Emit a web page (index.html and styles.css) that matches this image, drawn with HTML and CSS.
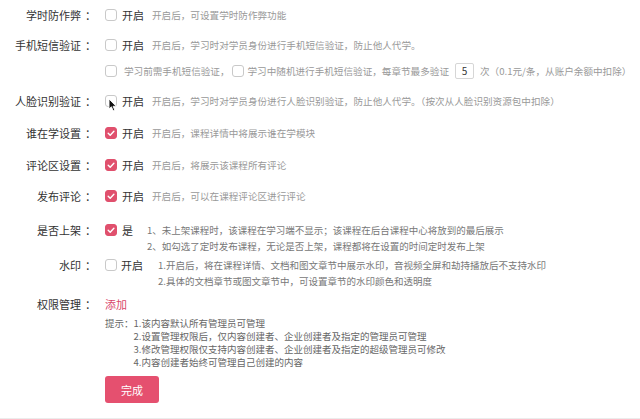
FILE: index.html
```html
<!DOCTYPE html>
<html lang="zh-CN">
<head>
<meta charset="utf-8">
<title>课程设置</title>
<link rel="stylesheet" href="styles.css">
</head>
<body>
<div class="page">
  <div class="form">
    <div class="row r1">
      <div class="label">学时防作弊<span class="colon">：</span></div>
      <div class="content">
        <span class="cb"></span><span class="opt">开启</span><span class="desc">开启后，可设置学时防作弊功能</span>
      </div>
    </div>
    <div class="row r2">
      <div class="label">手机短信验证<span class="colon">：</span></div>
      <div class="content">
        <span class="cb"></span><span class="opt">开启</span><span class="desc">开启后，学习时对学员身份进行手机短信验证，防止他人代学。</span>
      </div>
    </div>
    <div class="row r2b">
      <div class="label"></div>
      <div class="content">
        <span class="cb"></span><span class="desc sub1">学习前需手机短信验证，</span><span class="cb"></span><span class="desc sub2">学习中随机进行手机短信验证，每章节最多验证</span><span class="num">5</span><span class="desc sub3">次（0.1元/条，从账户余额中扣除）</span>
      </div>
    </div>
    <div class="row r3">
      <div class="label">人脸识别验证<span class="colon">：</span></div>
      <div class="content">
        <span class="cb cursor-host"><svg class="cursor" width="9" height="14" viewBox="0 0 9 14"><path d="M1 1 L1 11 L3.4 8.8 L5.2 12.8 L6.8 12.1 L5.1 8.3 L8.2 8.3 Z" fill="#111" stroke="#fff" stroke-width="0.9" stroke-linejoin="round"/></svg></span><span class="opt">开启</span><span class="desc">开启后，学习时对学员身份进行人脸识别验证，防止他人代学。（按次从人脸识别资源包中扣除）</span>
      </div>
    </div>
    <div class="row r4">
      <div class="label">谁在学设置<span class="colon">：</span></div>
      <div class="content">
        <span class="cb on"><svg viewBox="0 0 12 12" width="12" height="12"><path d="M3.2 6.2 L5.2 8.2 L8.9 4.2" fill="none" stroke="#fff" stroke-width="1.4" stroke-linecap="round" stroke-linejoin="round"/></svg></span><span class="opt">开启</span><span class="desc">开启后，课程详情中将展示谁在学模块</span>
      </div>
    </div>
    <div class="row r5">
      <div class="label">评论区设置<span class="colon">：</span></div>
      <div class="content">
        <span class="cb on"><svg viewBox="0 0 12 12" width="12" height="12"><path d="M3.2 6.2 L5.2 8.2 L8.9 4.2" fill="none" stroke="#fff" stroke-width="1.4" stroke-linecap="round" stroke-linejoin="round"/></svg></span><span class="opt">开启</span><span class="desc">开启后，将展示该课程所有评论</span>
      </div>
    </div>
    <div class="row r6">
      <div class="label">发布评论<span class="colon">：</span></div>
      <div class="content">
        <span class="cb on"><svg viewBox="0 0 12 12" width="12" height="12"><path d="M3.2 6.2 L5.2 8.2 L8.9 4.2" fill="none" stroke="#fff" stroke-width="1.4" stroke-linecap="round" stroke-linejoin="round"/></svg></span><span class="opt">开启</span><span class="desc">开启后，可以在课程评论区进行评论</span>
      </div>
    </div>
    <div class="row multi r7">
      <div class="label">是否上架<span class="colon">：</span></div>
      <div class="content">
        <span class="cb on"><svg viewBox="0 0 12 12" width="12" height="12"><path d="M3.2 6.2 L5.2 8.2 L8.9 4.2" fill="none" stroke="#fff" stroke-width="1.4" stroke-linecap="round" stroke-linejoin="round"/></svg></span><span class="opt opt-yes">是</span>
        <div class="notes">
          <div>1、未上架课程时，该课程在学习端不显示；该课程在后台课程中心将放到的最后展示</div>
          <div>2、如勾选了定时发布课程，无论是否上架，课程都将在设置的时间定时发布上架</div>
        </div>
      </div>
    </div>
    <div class="row multi r8">
      <div class="label">水印<span class="colon">：</span></div>
      <div class="content">
        <span class="cb"></span><span class="opt opt-wm">开启</span>
        <div class="notes">
          <div>1.开启后，将在课程详情、文档和图文章节中展示水印，音视频全屏和劫持播放后不支持水印</div>
          <div>2.具体的文档章节或图文章节中，可设置章节的水印颜色和透明度</div>
        </div>
      </div>
    </div>
    <div class="row multi r9">
      <div class="label">权限管理<span class="colon">：</span></div>
      <div class="content column">
        <a class="add">添加</a>
        <div class="tips">
          <span class="tips-head">提示：</span>
          <div class="tips-list">
            <div>1.该内容默认所有管理员可管理</div>
            <div>2.设置管理权限后，仅内容创建者、企业创建者及指定的管理员可管理</div>
            <div>3.修改管理权限仅支持内容创建者、企业创建者及指定的超级管理员可修改</div>
            <div>4.内容创建者始终可管理自己创建的内容</div>
          </div>
        </div>
        <button class="done">完成</button>
      </div>
    </div>
  </div>
</div>
</body>
</html>
```

FILE: styles.css
```css
html, body {
  margin: 0;
  padding: 0;
  background: #fff;
}
body {
  font-family: "Noto Sans CJK SC", "Noto Sans", sans-serif;
  color: #333;
}
.page {
  height: 419px;
  box-sizing: border-box;
  border-bottom: 1px solid #ececec;
  overflow: hidden;
}
.form {
  padding-top: 5px;
}
.row {
  display: flex;
  align-items: flex-start;
  height: 20px;
  line-height: 20px;
}
.label {
  width: 96px;
  flex: none;
  text-align: right;
  font-size: 11px;
  color: #333;
  margin-right: 9px;
  white-space: nowrap;
}
.colon {
  margin-left: 4px;
}
.content {
  display: flex;
  align-items: center;
  height: 20px;
}
.cb {
  position: relative;
  width: 12px;
  height: 12px;
  box-sizing: border-box;
  border: 1px solid #c9c9c9;
  border-radius: 3px;
  background: #fff;
  flex: none;
  display: inline-block;
}
.cb.on {
  background: #e0506d;
  border-color: #e0506d;
}
.cb.on svg {
  position: absolute;
  left: -1px;
  top: -1px;
}
.cursor {
  position: absolute;
  left: 2px;
  top: 2px;
}
.opt {
  font-size: 11px;
  color: #333;
  margin-left: 5px;
  margin-right: 8px;
}
.desc {
  font-size: 9.6px;
  color: #999;
  white-space: nowrap;
}
.sub1 {
  margin-left: 7px;
  margin-right: 2px;
}
.sub2 {
  margin-left: 4px;
}
.num {
  display: inline-block;
  width: 19px;
  height: 16px;
  box-sizing: border-box;
  border: 1px solid #d6d6d6;
  border-radius: 2px;
  text-align: center;
  line-height: 14px;
  font-size: 10px;
  color: #333;
  margin: 0 6px 0 6px;
}
.r2 { margin-top: 10px; }
.r2b { margin-top: 6px; }
.r3 { margin-top: 10px; }
.r4 { margin-top: 12px; }
.r5 { margin-top: 12px; }
.r6 { margin-top: 11px; }

.row.multi {
  height: auto;
  line-height: 16px;
}
.multi .content {
  height: auto;
  align-items: flex-start;
}
.multi .cb {
  margin-top: 2px;
}
.r7 { margin-top: 16px; }
.r8 { margin-top: 3px; }
.r9 { margin-top: 7px; }
.opt-yes {
  margin-right: 14px;
}
.opt-wm {
  margin-left: 4px;
  margin-right: 15px;
}
.notes {
  font-size: 9.5px;
  color: #777;
  line-height: 16px;
  white-space: nowrap;
}
.content.column {
  flex-direction: column;
  align-items: flex-start;
}
.add {
  font-size: 11px;
  color: #d9466a;
  line-height: 16px;
}
.tips {
  display: flex;
  margin-top: 5px;
  font-size: 9.5px;
  line-height: 13px;
  color: #666;
  white-space: nowrap;
}
.done {
  margin-top: 7px;
  width: 54px;
  height: 27px;
  border: none;
  border-radius: 3px;
  background: #e5506f;
  color: #fff;
  font-family: "Noto Sans CJK SC", "Noto Sans", sans-serif;
  font-size: 11px;
  padding: 0;
}
```
